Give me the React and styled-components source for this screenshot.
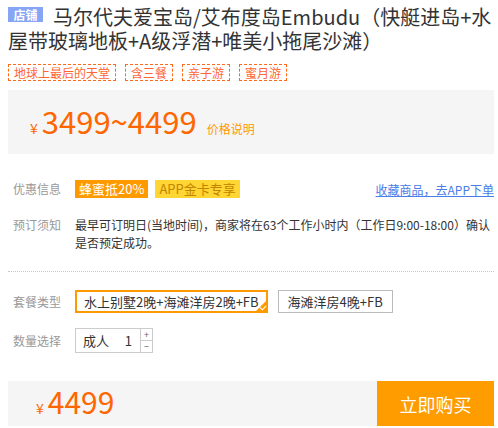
import React from 'react';
import styled, { createGlobalStyle } from 'styled-components';

const GlobalStyle = createGlobalStyle`
	body {
		margin: 0;
		background: #fff;
		font-family: "Noto Sans CJK SC", "Microsoft YaHei", sans-serif;
		color: #333;
	}
`;

const Page = styled.div`
	width: 486px;
	margin-left: 8px;
	padding-top: 5px;
`;

const Title = styled.h1`
	margin: 0;
	font-size: 20px;
	line-height: 24px;
	font-weight: normal;
	color: #333;
`;

const ShopBadge = styled.span`
	display: inline-block;
	vertical-align: top;
	margin: 2px 10px 0 0;
	width: 35px;
	height: 15px;
	line-height: 15px;
	text-align: center;
	background: #86a5f5;
	color: #fff;
	font-size: 12px;
	font-weight: bold;
	overflow: hidden;
`;

const Tags = styled.div`
	display: flex;
	gap: 9px;
	margin-top: 11px;
`;

const Tag = styled.span`
	height: 15px;
	line-height: 15px;
	padding: 0 5px;
	border: 1px dashed #ff6a1a;
	color: #ff6633;
	font-size: 12px;
`;

const PriceBox = styled.div`
	display: flex;
	align-items: baseline;
	height: 64px;
	box-sizing: border-box;
	margin-top: 9px;
	padding: 14px 0 0 22px;
	background: #f5f5f5;
	color: #ff6600;
`;

const Yen = styled.span`
	font-size: 14px;
	margin-right: 4px;
`;

const Amount = styled.span`
	font-size: ${p => p.size || 31}px;
	line-height: 34px;
`;

const PriceNote = styled.span`
	margin-left: 10px;
	font-size: 12px;
	color: #ff9900;
`;

const Row = styled.div`
	display: grid;
	grid-template-columns: 62px 1fr auto;
	align-items: ${p => p.top ? 'start' : 'center'};
	margin-top: ${p => p.gap}px;
	padding-left: 5px;
	font-size: 12px;
`;

const Label = styled.span`
	color: #999;
	font-size: 12px;
	line-height: 18px;
`;

const Promos = styled.div`
	display: flex;
	gap: 7px;
`;

const Promo = styled.span`
	height: 18px;
	line-height: 18px;
	padding: 0 4px;
	font-size: 13px;
	background: ${p => p.gold ? '#ffd633' : '#ff9900'};
	color: ${p => p.gold ? '#c28400' : '#fff'};
`;

const Link = styled.a`
	color: #4a7de8;
	text-decoration: underline;
	font-size: 12px;
`;

const Notice = styled.p`
	margin: 0;
	line-height: 18px;
	font-size: 12px;
	color: #333;
	grid-column: 2 / 4;
`;

const Divider = styled.div`
	margin-top: 19px;
	border-top: 1px dotted #c8c8c8;
`;

const Options = styled.div`
	display: flex;
	gap: 10px;
`;

const Option = styled.span`
	position: relative;
	height: 23px;
	box-sizing: border-box;
	line-height: ${p => p.active ? 19 : 21}px;
	padding: 0 ${p => p.active ? 7 : 9}px;
	border: ${p => p.active ? '2px solid #ff9900' : '1px solid #bbb'};
	font-size: 13px;
	color: #333;
`;

const Corner = styled.span`
	position: absolute;
	right: 0;
	bottom: 0;
	width: 0;
	height: 0;
	border-left: 10px solid transparent;
	border-bottom: 10px solid #ff9900;
	&::after {
		content: '';
		position: absolute;
		left: -5px;
		top: 3px;
		width: 3px;
		height: 5px;
		border: solid #fff;
		border-width: 0 1px 1px 0;
		transform: rotate(45deg);
	}
`;

const Counter = styled.div`
	display: flex;
	width: 78px;
	height: 25px;
	box-sizing: border-box;
	border: 1px solid #ccc;
	font-size: 13px;
`;

const CounterText = styled.div`
	flex: 1;
	display: flex;
	justify-content: space-between;
	align-items: center;
	padding: 0 8px 0 7px;
	color: #333;
`;

const Steps = styled.div`
	display: flex;
	flex-direction: column;
	width: 11px;
	border-left: 1px solid #ccc;
`;

const Step = styled.span`
	flex: 1;
	display: flex;
	align-items: center;
	justify-content: center;
	overflow: hidden;
	font-size: 9px;
	line-height: 11px;
	color: #666;
	& + & {
		border-top: 1px solid #ccc;
	}
`;

const BuyBar = styled.div`
	display: flex;
	height: 45px;
	margin-top: 28px;
`;

const BuyPrice = styled.div`
	flex: 1;
	display: flex;
	align-items: baseline;
	padding: 3px 0 0 28px;
	background: #f5f5f5;
	color: #ff6600;
`;

const BuyButton = styled.button`
	width: 117px;
	border: 0;
	background: #ff9c00;
	color: #fff;
	font-family: inherit;
	font-size: 18px;
`;

const App = () => (
	<Page>
		<GlobalStyle />
		<Title>
			<ShopBadge>店铺</ShopBadge>
			<span>马尔代夫爱宝岛/艾布度岛Embudu（快艇进岛+水屋带玻璃地板+A级浮潜+唯美小拖尾沙滩）</span>
		</Title>
		<Tags>
			{['地球上最后的天堂', '含三餐', '亲子游', '蜜月游'].map(t => <Tag key={t}>{t}</Tag>)}
		</Tags>
		<PriceBox>
			<Yen>¥</Yen>
			<Amount>3499~4499</Amount>
			<PriceNote>价格说明</PriceNote>
		</PriceBox>
		<Row gap={26}>
			<Label>优惠信息</Label>
			<Promos>
				<Promo>蜂蜜抵20%</Promo>
				<Promo gold>APP金卡专享</Promo>
			</Promos>
			<Link href="#">收藏商品，去APP下单</Link>
		</Row>
		<Row gap={18} top>
			<Label>预订须知</Label>
			<Notice>最早可订明日(当地时间)，商家将在63个工作小时内（工作日9:00-18:00）确认是否预定成功。</Notice>
		</Row>
		<Divider />
		<Row gap={18}>
			<Label>套餐类型</Label>
			<Options>
				<Option active>水上别墅2晚+海滩洋房2晚+FB<Corner /></Option>
				<Option>海滩洋房4晚+FB</Option>
			</Options>
		</Row>
		<Row gap={15}>
			<Label>数量选择</Label>
			<Counter>
				<CounterText><span>成人</span><span>1</span></CounterText>
				<Steps>
					<Step>+</Step>
					<Step>−</Step>
				</Steps>
			</Counter>
		</Row>
		<BuyBar>
			<BuyPrice>
				<Yen>¥</Yen>
				<Amount size={30}>4499</Amount>
			</BuyPrice>
			<BuyButton>立即购买</BuyButton>
		</BuyBar>
	</Page>
);

export default App;
